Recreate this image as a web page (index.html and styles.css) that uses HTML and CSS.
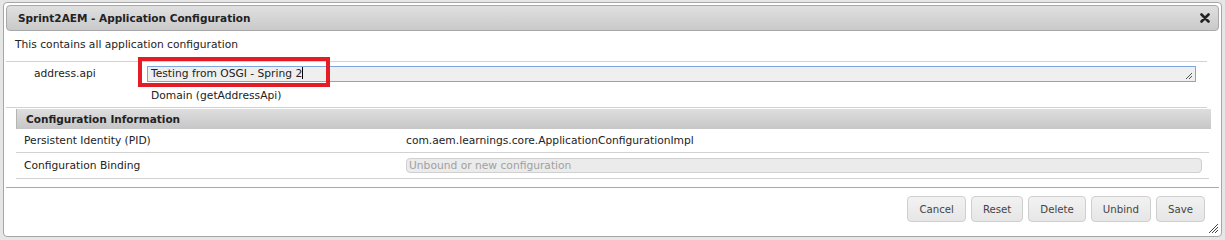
FILE: index.html
```html
<!DOCTYPE html>
<html>
<head>
<meta charset="utf-8">
<link rel="stylesheet" href="styles.css">
</head>
<body>
<div class="dialog">
  <div class="titlebar">
    <span class="title">Sprint2AEM - Application Configuration</span>
    <svg class="close" width="10" height="10" viewBox="0 0 10 10"><path d="M1.5 1.5 L8.5 8.5 M8.5 1.5 L1.5 8.5" stroke="#222" stroke-width="2.6" stroke-linecap="round"/></svg>
  </div>
  <div class="content">
    <div class="desc">This contains all application configuration</div>
    <div class="prop-row">
      <div class="prop-label">address.api</div>
      <div class="prop-field">
        <div class="textarea">Testing from OSGI - Spring 2<span class="caret"></span>
          <svg class="grip-small" width="9" height="9" viewBox="0 0 9 9"><path d="M8 2 L2 8 M8 5 L5 8" stroke="#555" stroke-width="1"/></svg>
        </div>
        <div class="hint">Domain (getAddressApi)</div>
      </div>
      <div class="highlight"></div>
    </div>
    <div class="info">
      <div class="info-head">Configuration Information</div>
      <div class="info-row">
        <div class="info-label">Persistent Identity (PID)</div>
        <div class="info-value">com.aem.learnings.core.ApplicationConfigurationImpl</div>
      </div>
      <div class="info-row">
        <div class="info-label">Configuration Binding</div>
        <div class="info-value"><div class="binding">Unbound or new configuration</div></div>
      </div>
    </div>
  </div>
  <div class="buttonpane">
    <button class="btn">Cancel</button>
    <button class="btn">Reset</button>
    <button class="btn">Delete</button>
    <button class="btn">Unbind</button>
    <button class="btn">Save</button>
    <svg class="grip" width="12" height="12" viewBox="0 0 12 12"><path d="M11 2 L2 11 M11 5 L5 11 M11 8 L8 11" stroke="#444" stroke-width="1"/></svg>
  </div>
</div>
</body>
</html>
```
FILE: styles.css
```css
html, body {
  margin: 0;
  padding: 0;
}
body {
  background: #e6e6e6;
  width: 1225px;
  height: 240px;
  font-family: "DejaVu Sans", Verdana, sans-serif;
  font-size: 10.7px;
  color: #222;
  padding-top: 2px;
  box-sizing: border-box;
}
.dialog {
  margin: 0 3px;
  width: 1219px;
  height: 235px;
  box-sizing: border-box;
  border: 1px solid #a6a6a6;
  border-radius: 4px;
  background: #fff;
  padding: 2px;
  display: flex;
  flex-direction: column;
  position: relative;
}
.titlebar {
  height: 26px;
  flex-shrink: 0;
  box-sizing: border-box;
  border: 1px solid #a8a8a8;
  border-radius: 4px;
  background: linear-gradient(#e0e0e0, #c9c9c9);
  display: flex;
  align-items: center;
  justify-content: space-between;
  padding: 0 8px 0 11px;
}
.title {
  font-weight: bold;
  font-size: 10.5px;
  color: #222;
}
.close {
  display: block;
}
.content {
  flex: 1;
  display: flex;
  flex-direction: column;
}
.desc {
  height: 31px;
  box-sizing: border-box;
  line-height: 28px;
  padding-left: 9px;
  border-bottom: 1px solid #d2d2d2;
  margin-right: 12px;
}
.prop-row {
  position: relative;
  display: flex;
  height: 46px;
  border-bottom: 1px solid #d2d2d2;
  margin-right: 12px;
  padding-top: 4px;
  box-sizing: border-box;
}
.prop-label {
  width: 141px;
  flex-shrink: 0;
  padding-left: 28px;
  box-sizing: border-box;
  line-height: 16px;
}
.prop-field {
  flex: 1;
  padding-right: 11px;
}
.textarea {
  position: relative;
  height: 16px;
  box-sizing: border-box;
  border: 1px solid #7ea6dc;
  background: #efefef;
  padding-left: 3px;
  line-height: 14px;
  color: #222;
}
.caret {
  display: inline-block;
  width: 1px;
  height: 12px;
  background: #000;
  vertical-align: -2px;
}
.grip-small {
  position: absolute;
  right: 2px;
  bottom: 1px;
}
.hint {
  padding-left: 4px;
  line-height: 14px;
  margin-top: 7px;
}
.highlight {
  position: absolute;
  left: 132px;
  top: -5px;
  width: 192px;
  height: 30px;
  box-sizing: border-box;
  border: 4px solid #e31c25;
}
.info {
  margin: 1px 8px 0 10px;
}
.info-head {
  height: 20px;
  box-sizing: border-box;
  background: linear-gradient(#dedede, #c6c6c6);
  border-left: 1px solid #b5b5b5;
  font-weight: bold;
  line-height: 20px;
  padding-left: 9px;
  font-size: 10.5px;
}
.info-row {
  display: flex;
  align-items: center;
  height: 24px;
  box-sizing: border-box;
  border-bottom: 1px solid #d2d2d2;
  margin-right: 2px;
}
.info-row + .info-row {
  height: 26px;
}
.info-label {
  width: 390px;
  flex-shrink: 0;
  padding-left: 8px;
  box-sizing: border-box;
}
.info-value {
  flex: 1;
  padding-right: 7px;
}
.binding {
  height: 15px;
  box-sizing: border-box;
  border: 1px solid #d0d0d0;
  border-radius: 4px;
  background: #ebebeb;
  color: #a0a0a0;
  line-height: 13px;
  padding-left: 2px;
}
.buttonpane {
  height: 47px;
  flex-shrink: 0;
  box-sizing: border-box;
  border-top: 1px solid #aaa;
  display: flex;
  justify-content: flex-end;
  align-items: flex-start;
  padding: 8px 14px 0 0;
  gap: 5px;
  position: relative;
}
.btn {
  height: 26px;
  font-family: "DejaVu Sans", Verdana, sans-serif;
  font-size: 10.2px;
  color: #444;
  border: 1px solid #cfcfcf;
  border-radius: 4px;
  background: linear-gradient(#f2f2f2, #e6e6e6);
  padding: 0 11px;
  margin: 0;
}
.grip {
  position: absolute;
  right: 0;
  bottom: 0;
}
```
